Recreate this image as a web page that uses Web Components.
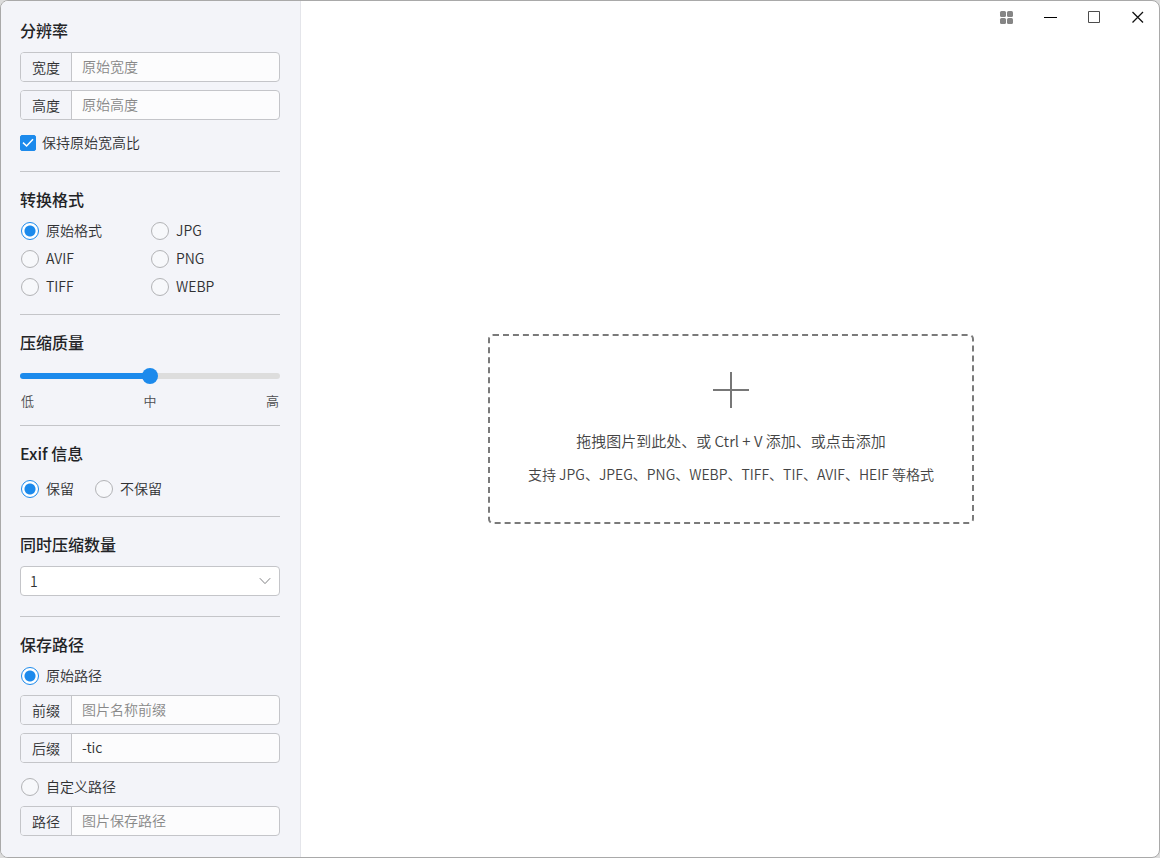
<!DOCTYPE html>
<html lang="zh-CN">
<head>
<meta charset="utf-8">
<meta name="viewport" content="width=device-width, initial-scale=1">
<title>图片压缩</title>
<style>
  :root {
    --accent: #1c8aec;
    --ink: #303133;
    --muted: #888888;
    --line: #c4c5c9;
    --panel: #f3f4f9;
  }
  html, body { margin: 0; }
  body {
    background: #dcdcdc;
    color: var(--ink);
    font: 350 14px/20px "Noto Sans CJK SC", "Noto Sans", sans-serif;
  }
</style>
</head>
<body>
<tic-window>
  <tic-section slot="side" heading="分辨率">
    <tic-field label="宽度" placeholder="原始宽度"></tic-field>
    <tic-field label="高度" placeholder="原始高度"></tic-field>
    <tic-check label="保持原始宽高比"></tic-check>
  </tic-section>
  <tic-section slot="side" heading="转换格式">
    <tic-radios layout="grid" label="转换格式" options="原始格式,JPG,AVIF,PNG,TIFF,WEBP"></tic-radios>
  </tic-section>
  <tic-section slot="side" heading="压缩质量" class="roomy">
    <tic-slider label="压缩质量" marks="低,中,高"></tic-slider>
  </tic-section>
  <tic-section slot="side" heading="Exif 信息" class="roomy">
    <tic-radios layout="row" label="Exif 信息" options="保留,不保留"></tic-radios>
  </tic-section>
  <tic-section slot="side" heading="同时压缩数量">
    <tic-select label="同时压缩数量" options="1,2,3,4"></tic-select>
  </tic-section>
  <tic-section slot="side" heading="保存路径">
    <tic-save-path></tic-save-path>
  </tic-section>
  <tic-title-bar slot="bar"></tic-title-bar>
  <tic-drop-zone></tic-drop-zone>
</tic-window>

<script>
const radioCss = `
  label { display: flex; align-items: center; gap: 7px; height: 20px; color: var(--ink); }
  label span { padding-bottom: 2px; }
  input[type=radio] {
    appearance: none; box-sizing: border-box; flex: none;
    width: 18px; height: 18px; margin: 0 0 0 1px;
    border: 1px solid #b2b3b6; border-radius: 50%; background: #f7f8fb;
  }
  input[type=radio]:checked {
    border-color: var(--accent);
    background: radial-gradient(circle, var(--accent) 5px, #fff 6px);
  }
`;

function define(name, render) {
  customElements.define(name, class extends HTMLElement {
    connectedCallback() {
      if (this.shadowRoot) return;
      this.attachShadow({ mode: 'open' }).innerHTML = render(this);
    }
  });
}
const list = el => el.getAttribute('options').split(',');

define('tic-window', () => `
  <style>
    :host {
      display: grid; grid-template-columns: 300px minmax(0, 1fr);
      box-sizing: border-box; min-height: 100vh;
      border: 1px solid #a9a9a9; border-radius: 8px;
      background: #fff; overflow: hidden;
    }
    aside {
      box-sizing: border-box; padding: 2px 20px 20px 19px;
      background: var(--panel); border-right: 1px solid #e4e5ea;
    }
    main { display: grid; grid-template-rows: 32px 1fr 32px; }
    .stage { display: grid; place-items: center; padding: 0 16px 0 18px; }
  </style>
  <aside><slot name="side"></slot></aside>
  <main>
    <slot name="bar"></slot>
    <div class="stage"><slot></slot></div>
  </main>`);

define('tic-section', el => `
  <style>
    :host { display: block; padding: 16px 0 17px; border-bottom: 1px solid var(--line); }
    :host(:last-of-type) { border-bottom: 0; padding-bottom: 0; }
    h2 { margin: 0 0 11px; font-size: 16px; line-height: 22px; font-weight: 500; color: #222326; }
    :host(.roomy) h2 { margin-bottom: 15px; }
  </style>
  <h2>${el.getAttribute('heading')}</h2>
  <slot></slot>`);

define('tic-field', el => `
  <style>
    :host { display: block; margin-bottom: 8px; }
    div {
      display: flex; box-sizing: border-box; height: 30px;
      border: 1px solid var(--line); border-radius: 4px; background: #fcfcfd; overflow: hidden;
    }
    label {
      box-sizing: border-box; width: 51px; padding-left: 11px; line-height: 28px;
      background: var(--panel); border-right: 1px solid var(--line);
    }
    input {
      flex: 1; min-width: 0; padding: 0 10px 2px; border: 0; outline: 0; background: none;
      font: inherit; color: var(--ink);
    }
    input::placeholder { color: var(--muted); opacity: 1; }
  </style>
  <div>
    <label for="f">${el.getAttribute('label')}</label>
    <input id="f" type="text" placeholder="${el.getAttribute('placeholder') || ''}" value="${el.getAttribute('value') || ''}">
  </div>`);

define('tic-check', el => `
  <style>
    :host { display: block; margin: 13px 0 1px; }
    label { display: flex; align-items: center; gap: 6px; height: 20px; }
    .box { display: grid; width: 16px; height: 16px; }
    .text { padding-bottom: 2px; }
    input, svg { grid-area: 1 / 1; }
    input {
      appearance: none; box-sizing: border-box; width: 16px; height: 16px; margin: 0;
      border: 1px solid #b2b3b6; border-radius: 2px; background: #fff;
    }
    input:checked { border-color: var(--accent); background: var(--accent); }
    svg { pointer-events: none; }
  </style>
  <label>
    <span class="box">
      <input type="checkbox" checked>
      <svg width="16" height="16" viewBox="0 0 16 16" fill="none" stroke="#fff" stroke-width="1.5"><path d="M3 7.6 6.6 11 13 4.2"/></svg>
    </span>
    <span class="text">${el.getAttribute('label')}</span>
  </label>`);

define('tic-radios', el => `
  <style>
    :host { display: block; }
    ${radioCss}
    .grid { display: grid; grid-template-columns: 1fr 1fr; row-gap: 8px; }
    .row { display: flex; gap: 20px; }
  </style>
  <div class="${el.getAttribute('layout')}" role="radiogroup" aria-label="${el.getAttribute('label')}">
    ${list(el).map((o, i) => `<label><input type="radio" name="choice" value="${o}"${i ? '' : ' checked'}><span>${o}</span></label>`).join('')}
  </div>`);

define('tic-slider', el => `
  <style>
    :host { display: block; margin-bottom: -4px; }
    input {
      appearance: none; display: block; width: 100%; height: 16px; margin: 0 0 7px;
      background: none;
    }
    input::-webkit-slider-runnable-track {
      height: 6px; border-radius: 3px;
      background: linear-gradient(90deg, var(--accent) 50%, #dddddd 50%);
    }
    input::-webkit-slider-thumb {
      appearance: none; width: 16px; height: 16px; margin-top: -5px;
      border-radius: 50%; background: var(--accent);
    }
    .marks {
      display: flex; justify-content: space-between; padding: 0 1px 1px;
      font-size: 13px; color: #4c4d50;
    }
  </style>
  <input type="range" min="0" max="2" value="1" aria-label="${el.getAttribute('label')}">
  <div class="marks">${el.getAttribute('marks').split(',').map(m => `<span>${m}</span>`).join('')}</div>`);

define('tic-select', el => `
  <style>
    :host { display: grid; align-items: center; margin-bottom: 3px; }
    select, svg { grid-area: 1 / 1; }
    select {
      appearance: none; box-sizing: border-box; width: 100%; height: 30px; padding: 0 9px;
      border: 1px solid var(--line); border-radius: 4px; background: #fff;
      font: inherit; color: var(--ink);
    }
    svg { justify-self: end; margin-right: 9px; pointer-events: none; }
  </style>
  <select aria-label="${el.getAttribute('label')}">${list(el).map(o => `<option>${o}</option>`).join('')}</select>
  <svg width="12" height="8" viewBox="0 0 12 8" fill="none" stroke="#808184"><path d="M.8 1.2 6 6.6l5.2-5.4"/></svg>`);

define('tic-save-path', () => `
  <style>
    :host { display: block; }
    ${radioCss}
    label { margin-bottom: 9px; }
    .custom { margin-top: 14px; }
    .last { margin-bottom: 0; }
  </style>
  <label><input type="radio" name="path" checked><span>原始路径</span></label>
  <tic-field label="前缀" placeholder="图片名称前缀"></tic-field>
  <tic-field label="后缀" value="-tic"></tic-field>
  <label class="custom"><input type="radio" name="path"><span>自定义路径</span></label>
  <tic-field class="last" label="路径" placeholder="图片保存路径"></tic-field>`);

define('tic-title-bar', () => `
  <style>
    :host { display: flex; justify-content: flex-end; }
    button {
      display: grid; place-items: center; width: 44px; height: 32px; padding: 0;
      border: 0; background: none;
    }
    button:last-child { margin-right: -1px; }
  </style>
  <button type="button" aria-label="菜单">
    <svg width="14" height="14" viewBox="0 0 14 14" fill="#858585"><rect x="1" y="1" width="6" height="6" rx="1.5"/><rect x="8" y="1" width="6" height="6" rx="1.5"/><rect x="1" y="8" width="6" height="6" rx="1.5"/><rect x="8" y="8" width="6" height="6" rx="1.5"/></svg>
  </button>
  <button type="button" aria-label="最小化">
    <svg width="14" height="14" viewBox="0 0 14 14"><path d="M1 7.5h13" stroke="#000"/></svg>
  </button>
  <button type="button" aria-label="最大化">
    <svg width="14" height="14" viewBox="0 0 14 14" fill="none" stroke="#4c4c4c"><path d="M1.500 1.500h11v11h-11z"/></svg>
  </button>
  <button type="button" aria-label="关闭">
    <svg width="14" height="14" viewBox="0 0 14 14" stroke="#111" stroke-width="1.300"><path d="M1.500 2l10.500 10.500M12 2 1.500 12.500"/></svg>
  </button>`);

define('tic-drop-zone', () => `
  <style>
    :host { display: block; width: 486px; max-width: 100%; }
    button {
      display: flex; flex-direction: column; align-items: center;
      box-sizing: border-box; width: 100%; min-height: 190px; padding: 36px 16px;
      border: 2px dashed #7a7a7a; border-radius: 5px; background: none;
      font: inherit; color: #444;
    }
    .lead { margin: 22px 0 12px; font-size: 15px; line-height: 22px; }
  </style>
  <button type="button">
    <svg width="36" height="36" viewBox="0 0 36 36" fill="none" stroke="#777" stroke-width="2"><path d="M0 18h36M18 0v36"/></svg>
    <span class="lead">拖拽图片到此处、或 Ctrl + V 添加、或点击添加</span>
    <span>支持 JPG、JPEG、PNG、WEBP、TIFF、TIF、AVIF、HEIF 等格式</span>
  </button>`);
</script>
</body>
</html>
